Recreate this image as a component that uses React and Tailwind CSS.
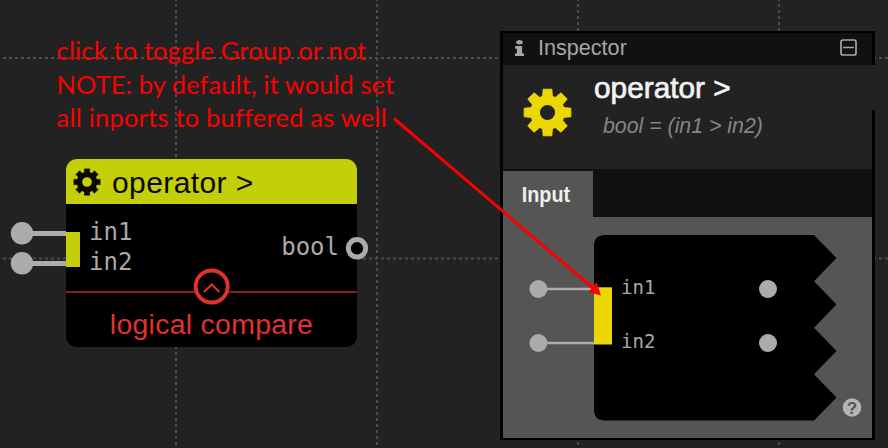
import { FaInfo } from 'react-icons/fa';

const ANGLES = [0, 45, 90, 135, 180, 225, 270, 315];

function Gear({ className, ring, ringWidth, tooth }) {
  return (
    <svg viewBox="-24 -24 48 48" className={className}>
      <circle r={ring} fill="none" stroke="currentColor" strokeWidth={ringWidth} />
      {ANGLES.map((a) => (
        <path key={a} d={tooth} transform={`rotate(${a})`} fill="currentColor" stroke="currentColor" strokeWidth="1" strokeLinejoin="round" />
      ))}
    </svg>
  );
}

function Grid() {
  return (
    <svg className="absolute inset-0" width="888" height="448">
      <g stroke="#4c4c4c" strokeWidth="2" strokeDasharray="3 3">
        <path d="M176 -2V448M377 -2V448M578 -2V448M779 -2V448" />
        <path d="M-3 58H888M-3 258.5H888" />
      </g>
    </svg>
  );
}

function OperatorNode() {
  return (
    <div className="absolute left-[66px] top-[159px] flex h-[188px] w-[291px] flex-col overflow-hidden rounded-[11px] bg-black">
      <header className="flex h-[45px] shrink-0 items-center bg-[#c4ce09] pl-[7px] text-[#080800]">
        <Gear className="h-[28px] w-[28px]" ring={13} ringWidth={9.4} tooth="M-4 -14L-4.6 -22.5H4.6L4 -14Z" />
        <span className="ml-[11px] mt-[3px] font-['Liberation_Sans'] text-[30px] leading-none tracking-[0.4px]">operator &gt;</span>
      </header>
      <div className="flex h-[89px] shrink-0 items-start justify-between border-b-2 border-[#8c1d1d] font-['DejaVu_Sans_Mono'] text-[24px] text-[#a9a9a9]">
        <div className="flex">
          <div className="mt-[28px] h-[35px] w-[14px] bg-[#c4ce09]" />
          <div className="ml-[9px] mt-[13px] leading-[30px]">
            <div>in1</div>
            <div>in2</div>
          </div>
        </div>
        <span className="mr-[18px] mt-[28px] leading-[30px]">bool</span>
      </div>
      <p className="mt-[15px] text-center font-['Liberation_Sans'] text-[28.4px] leading-[32px] tracking-[0.3px] text-[#e2312f]">logical compare</p>
    </div>
  );
}

function NodePorts() {
  return (
    <svg className="absolute inset-0" width="888" height="448">
      <g stroke="#ababab" fill="#ababab">
        <path d="M22 233.5H66M22 263.5H66" strokeWidth="5" />
        <circle cx="22" cy="233.3" r="11.2" stroke="none" />
        <circle cx="22" cy="263.3" r="11.2" stroke="none" />
        <circle cx="357" cy="248.3" r="8.7" fill="#000" strokeWidth="5" />
      </g>
      <circle cx="211.7" cy="286.5" r="16" fill="#000" stroke="#e2312f" strokeWidth="3.8" />
      <path d="M204 292L211.7 284.5L219.4 292" fill="none" stroke="#e2312f" strokeWidth="2" />
    </svg>
  );
}

function PortDiagram() {
  return (
    <svg className="block" width="370" height="221" viewBox="503 217 370 221">
      <path d="M605 235H814L836.5 258L814 281.3L836.5 304.5L814 327.8L836.5 351L814 374.3L836.5 397.5L814 420.5H605Q594 420.5 594 409.5V246Q594 235 605 235Z" fill="#000" />
      <path d="M538 289H594M538 343H594" stroke="#ababab" strokeWidth="2.5" />
      <g fill="#ababab">
        <circle cx="538.4" cy="289" r="9" />
        <circle cx="538.4" cy="343" r="9" />
        <circle cx="768" cy="289" r="9" />
        <circle cx="768" cy="343" r="9" />
      </g>
      <rect x="594" y="287.3" width="18" height="57.2" fill="#ecd604" />
      <g fill="#a9a9a9" fontFamily="DejaVu Sans Mono, monospace" fontSize="19">
        <text x="621" y="293.7">in1</text>
        <text x="621" y="347.7">in2</text>
      </g>
      <circle cx="852" cy="407.5" r="9.3" fill="#b4b4b4" />
      <text x="852" y="413.5" textAnchor="middle" fill="#555" fontFamily="Liberation Sans, sans-serif" fontWeight="700" fontSize="17">?</text>
    </svg>
  );
}

function Inspector() {
  return (
    <section className="absolute left-[500px] top-[31px] flex h-[409px] w-[375px] flex-col border-x-[3px] border-b-2 border-t-2 border-black bg-[#222] font-['Liberation_Sans']">
      <header className="flex h-[32px] shrink-0 items-center bg-[#111] text-[#a6a6a6]">
        <FaInfo className="mb-[3px] ml-[12px] h-[16px] w-[9px]" preserveAspectRatio="none" />
        <span className="ml-[14px] mt-[-2px] text-[21.6px] leading-none">Inspector</span>
        <svg className="mb-[3px] ml-auto mr-[15px]" width="17" height="17" viewBox="0 0 17 17" fill="none" stroke="currentColor">
          <rect x="1" y="1" width="15" height="15" rx="2" strokeWidth="1.7" />
          <path d="M3 8.5H14" strokeWidth="1.5" />
        </svg>
      </header>
      <div className="relative flex h-[105px] shrink-0 border-b border-[#111]">
        <div className="absolute -right-[3px] top-0 h-[45px] w-[3px] bg-[#222]" />
        <Gear className="ml-[20px] mt-[23px] h-[49px] w-[49px] text-[#ecd604]" ring={12.2} ringWidth={9.6} tooth="M-4.9 -14L-4.2 -22.8H4.2L4.9 -14Z" />
        <div className="ml-[22px] pt-[7px]">
          <h1 className="text-[29.8px] leading-[32px] text-[#f2f2f2] [-webkit-text-stroke:0.7px_#f2f2f2]">operator &gt;</h1>
          <p className="ml-[9px] mt-[10px] text-[21.3px] italic leading-[24px] text-[#858585]">bool = (in1 &gt; in2)</p>
        </div>
      </div>
      <nav className="flex h-[47px] shrink-0 bg-[#111]">
        <span className="mt-px flex w-[90px] items-center justify-center bg-[#555] pr-[4px] text-[22px] font-bold text-[#f0f0f0]">
          <span className="origin-center scale-x-90">Input</span>
        </span>
      </nav>
      <div className="min-h-0 flex-1 bg-[#555]">
        <PortDiagram />
      </div>
    </section>
  );
}

function Annotation() {
  return (
    <>
      <div className="absolute left-[56.6px] top-[34px] whitespace-nowrap font-['Lato'] text-[25.4px] leading-[33.5px] text-[#fa0000] [font-variant-ligatures:none]">
        <p className="tracking-[0.18px]">click to toggle Group or not</p>
        <p className="tracking-[0.11px]">NOTE: by default, it would set</p>
        <p className="tracking-[0.25px]">all inports to buffered as well</p>
      </div>
      <svg className="absolute inset-0" width="888" height="448">
        <path d="M394 118.5L594 289" stroke="#fa0000" strokeWidth="3" />
        <path d="M601 295.5L588.5 292L596.5 282Z" fill="#fa0000" />
      </svg>
    </>
  );
}

export default function App() {
  return (
    <main className="relative h-[448px] w-[888px] overflow-hidden bg-[#222]">
      <Grid />
      <OperatorNode />
      <NodePorts />
      <Inspector />
      <Annotation />
    </main>
  );
}
